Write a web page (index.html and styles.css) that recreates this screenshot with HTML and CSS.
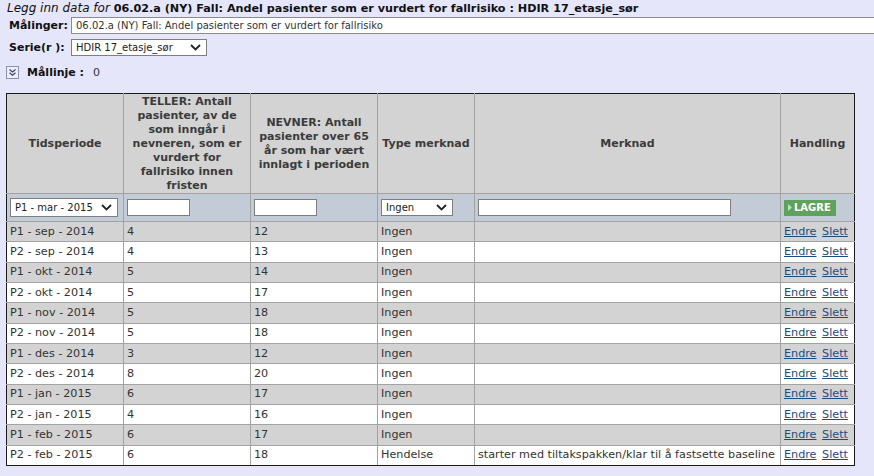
FILE: index.html
```html
<!DOCTYPE html>
<html lang="no">
<head>
<meta charset="utf-8">
<title>Legg inn data</title>
<link rel="stylesheet" href="styles.css">
</head>
<body>
<div class="title"><i>Legg inn data for</i> <b>06.02.a (NY) Fall: Andel pasienter som er vurdert for fallrisiko : HDIR 17_etasje_sør</b></div>
<div class="field">
  <span class="lbl">Målinger:</span>
  <div class="wide">06.02.a (NY) Fall: Andel pasienter som er vurdert for fallrisiko</div>
</div>
<div class="field f2">
  <span class="lbl">Serie(r ):</span>
  <div class="sel serie"><span>HDIR 17_etasje_sør</span><svg width="11" height="7" viewBox="0 0 11 7"><path d="M1 1 L5.5 5.5 L10 1" fill="none" stroke="#222" stroke-width="1.8"/></svg></div>
</div>
<div class="mal">
  <svg class="toggle" width="13" height="13" viewBox="0 0 13 13"><rect x="0.5" y="0.5" width="12" height="12" fill="#eeeefa" stroke="#8a94ad"/><path d="M3.5 3.5 L6.5 6 L9.5 3.5 M3.5 6.8 L6.5 9.3 L9.5 6.8" fill="none" stroke="#3a4660" stroke-width="1.2"/></svg>
  <b>Mållinje :</b><span class="zero">0</span>
</div>
<table class="grid">
  <colgroup>
    <col class="c1"><col class="c2"><col class="c3"><col class="c4"><col class="c5"><col class="c6">
  </colgroup>
  <thead>
    <tr class="head">
      <th>Tidsperiode</th>
      <th>TELLER: Antall<br>pasienter, av de<br>som inngår i<br>nevneren, som er<br>vurdert for<br>fallrisiko innen<br>fristen</th>
      <th>NEVNER: Antall<br>pasienter over 65<br>år som har vært<br>innlagt i perioden</th>
      <th>Type merknad</th>
      <th>Merknad</th>
      <th>Handling</th>
    </tr>
  </thead>
  <tbody>
    <tr class="inrow">
      <td><div class="sel per"><span>P1 - mar - 2015</span><svg width="11" height="7" viewBox="0 0 11 7"><path d="M1 1 L5.5 5.5 L10 1" fill="none" stroke="#222" stroke-width="1.8"/></svg></div></td>
      <td><div class="txt num"></div></td>
      <td><div class="txt num"></div></td>
      <td><div class="sel typ"><span>Ingen</span><svg width="11" height="7" viewBox="0 0 11 7"><path d="M1 1 L5.5 5.5 L10 1" fill="none" stroke="#222" stroke-width="1.8"/></svg></div></td>
      <td><div class="txt merk"></div></td>
      <td><span class="lagre"><svg width="4" height="7" viewBox="0 0 4 7"><path d="M0 0 L4 3.5 L0 7Z" fill="#b9e3b4"/></svg>LAGRE</span></td>
    </tr>
    <tr class="odd"><td>P1 - sep - 2014</td><td>4</td><td>12</td><td>Ingen</td><td></td><td class="act"><a href="#">Endre</a> <a href="#">Slett</a></td></tr>
    <tr class="even"><td>P2 - sep - 2014</td><td>4</td><td>13</td><td>Ingen</td><td></td><td class="act"><a href="#">Endre</a> <a href="#">Slett</a></td></tr>
    <tr class="odd"><td>P1 - okt - 2014</td><td>5</td><td>14</td><td>Ingen</td><td></td><td class="act"><a href="#">Endre</a> <a href="#">Slett</a></td></tr>
    <tr class="even"><td>P2 - okt - 2014</td><td>5</td><td>17</td><td>Ingen</td><td></td><td class="act"><a href="#">Endre</a> <a href="#">Slett</a></td></tr>
    <tr class="odd"><td>P1 - nov - 2014</td><td>5</td><td>18</td><td>Ingen</td><td></td><td class="act"><a href="#">Endre</a> <a href="#">Slett</a></td></tr>
    <tr class="even"><td>P2 - nov - 2014</td><td>5</td><td>18</td><td>Ingen</td><td></td><td class="act"><a href="#">Endre</a> <a href="#">Slett</a></td></tr>
    <tr class="odd"><td>P1 - des - 2014</td><td>3</td><td>12</td><td>Ingen</td><td></td><td class="act"><a href="#">Endre</a> <a href="#">Slett</a></td></tr>
    <tr class="even"><td>P2 - des - 2014</td><td>8</td><td>20</td><td>Ingen</td><td></td><td class="act"><a href="#">Endre</a> <a href="#">Slett</a></td></tr>
    <tr class="odd"><td>P1 - jan - 2015</td><td>6</td><td>17</td><td>Ingen</td><td></td><td class="act"><a href="#">Endre</a> <a href="#">Slett</a></td></tr>
    <tr class="even"><td>P2 - jan - 2015</td><td>4</td><td>16</td><td>Ingen</td><td></td><td class="act"><a href="#">Endre</a> <a href="#">Slett</a></td></tr>
    <tr class="odd"><td>P1 - feb - 2015</td><td>6</td><td>17</td><td>Ingen</td><td></td><td class="act"><a href="#">Endre</a> <a href="#">Slett</a></td></tr>
    <tr class="even last"><td>P2 - feb - 2015</td><td>6</td><td>18</td><td>Hendelse</td><td>starter med tiltakspakken/klar til å fastsette baseline</td><td class="act"><a href="#">Endre</a> <a href="#">Slett</a></td></tr>
  </tbody>
</table>
</body>
</html>
```
FILE: styles.css
```css
html, body {
  margin: 0;
  padding: 0;
  overflow: hidden;
}
body {
  background: #e6e6fa;
  font-family: "DejaVu Sans", Verdana, sans-serif;
  font-size: 11px;
  color: #333;
  width: 874px;
  height: 476px;
}
.title {
  height: 17px;
  line-height: 16px;
  padding-left: 7px;
  font-size: 12px;
  color: #111;
  white-space: nowrap;
  overflow: hidden;
}
.title i { font-style: italic; font-weight: normal; }
.title b { font-size: 11.2px; }
.field {
  display: flex;
  align-items: center;
  padding-left: 9px;
  height: 17px;
  white-space: nowrap;
  overflow: hidden;
}
.f2 { margin-top: 5px; }
.lbl {
  width: 62px;
  flex-shrink: 0;
  font-weight: bold;
  color: #111;
}
.wide {
  flex-shrink: 0;
  width: 880px;
  height: 15px;
  line-height: 15px;
  border: 1px solid #8c8c8c;
  background: #fff;
  padding-left: 4px;
  font-size: 10px;
  color: #333;
}
.sel {
  display: flex;
  align-items: center;
  justify-content: space-between;
  box-sizing: border-box;
  border: 1px solid #7e7e7e;
  background: #fff;
  padding: 0 5px 0 4px;
  font-size: 10px;
  color: #222;
  white-space: nowrap;
}
.serie { width: 136px; height: 17px; }
.per { width: 108px; height: 19px; }
.typ { width: 72px; height: 17px; }
.mal {
  display: flex;
  align-items: center;
  height: 13px;
  margin-top: 10px;
  padding-left: 6px;
  color: #111;
}
.toggle { margin-right: 8px; }
.mal b { font-weight: bold; }
.zero { margin-left: 9px; color: #333; }
.grid {
  margin: 14px 0 0 6px;
  border-collapse: collapse;
  table-layout: fixed;
  width: 849px;
}
.c1 { width: 117px; }
.c2 { width: 127px; }
.c3 { width: 127px; }
.c4 { width: 97px; }
.c5 { width: 306px; }
.c6 { width: 74px; }
.grid th, .grid td {
  border: 1px solid #a3a3a3;
  padding: 0 0 0 3px;
  white-space: nowrap;
  overflow: hidden;
}
.grid tr > :first-child { border-left-color: #1a1a1a; }
.grid tr > :last-child { border-right-color: #1a1a1a; }
.head th { border-top-color: #1a1a1a; }
.last td { border-bottom-color: #1a1a1a; }
.head th {
  height: 99px;
  background: #d3d3d3;
  color: #3b3b3b;
  font-weight: bold;
  line-height: 14px;
  text-align: center;
  vertical-align: middle;
  padding: 0 2px;
}
.inrow td {
  height: 27px;
  background: #c3cbd6;
  vertical-align: middle;
}
.txt {
  box-sizing: border-box;
  height: 17px;
  background: #fff;
  border: 1px solid #7e7e7e;
}
.num { width: 63px; }
.merk { width: 253px; }
.lagre {
  display: inline-flex;
  align-items: center;
  gap: 2px;
  box-sizing: border-box;
  width: 52px;
  height: 16px;
  padding-left: 4px;
  background: #5fa25c;
  color: #fff;
  font-weight: bold;
  font-size: 10px;
  vertical-align: middle;
}
.odd td, .even td {
  height: 19.33px;
  line-height: 14px;
  vertical-align: middle;
  font-size: 11.2px;
}
.odd td { background: #d3d3d3; }
.even td { background: #fff; }
.act a {
  color: #1d4d7c;
  text-decoration: underline;
}
.act { padding-left: 3px; word-spacing: 2px; }
```
